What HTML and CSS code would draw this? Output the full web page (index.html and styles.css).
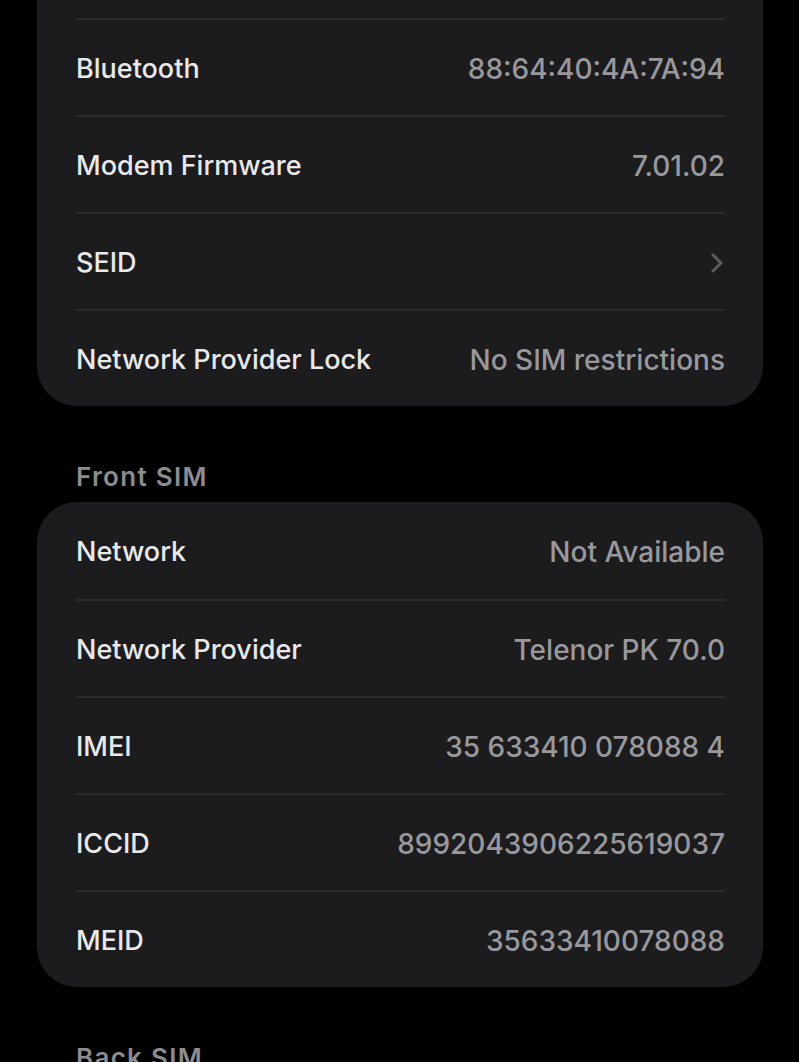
FILE: index.html
```html
<!DOCTYPE html>
<html lang="en">
  <head>
    <meta charset="UTF-8" />
    <meta name="viewport" content="width=device-width, initial-scale=1.0" />
    <title>About</title>
    <link rel="stylesheet" href="styles.css">
  </head>
  <body>
    <div class="page">
      <div class="card card-top">
        <div class="card-spacer"></div>
        <div class="row">
          <span class="label">Bluetooth</span>
          <span class="value">88:64:40:4A:7A:94</span>
        </div>
        <div class="row">
          <span class="label">Modem Firmware</span>
          <span class="value">7.01.02</span>
        </div>
        <div class="row">
          <span class="label">SEID</span>
          <svg class="chevron" width="12" height="20" viewBox="0 0 12 20">
            <path d="M2 2 L10 10 L2 18" fill="none" stroke="#5b5b60" stroke-width="3" stroke-linecap="round" stroke-linejoin="round" />
          </svg>
        </div>
        <div class="row">
          <span class="label">Network Provider Lock</span>
          <span class="value">No SIM restrictions</span>
        </div>
      </div>

      <h3 class="section-title">Front SIM</h3>
      <div class="card">
        <div class="row">
          <span class="label">Network</span>
          <span class="value">Not Available</span>
        </div>
        <div class="row">
          <span class="label">Network Provider</span>
          <span class="value">Telenor PK 70.0</span>
        </div>
        <div class="row">
          <span class="label">IMEI</span>
          <span class="value">35 633410 078088 4</span>
        </div>
        <div class="row">
          <span class="label">ICCID</span>
          <span class="value">8992043906225619037</span>
        </div>
        <div class="row">
          <span class="label">MEID</span>
          <span class="value">35633410078088</span>
        </div>
      </div>

      <h3 class="section-title">Back SIM</h3>
    </div>
  </body>
</html>
```

FILE: styles.css
```css
body {
  margin: 0;
  background-color: #000000;
  font-family: Inter, "Liberation Sans", sans-serif;
  overflow: hidden;
}

.page {
  padding: 0 36px 0 37px;
}

.card {
  background-color: #1c1c1e;
  border-radius: 40px;
  padding: 0 38px 0 39px;
}

.card-top {
  border-top-left-radius: 0;
  border-top-right-radius: 0;
}

.card-spacer {
  height: 18px;
}

.row {
  height: 97px;
  box-sizing: border-box;
  padding-top: 2px;
  display: flex;
  align-items: center;
  justify-content: space-between;
  border-top: 2px solid #2c2c2f;
}

.card > .row:first-child {
  border-top: none;
}

.label {
  color: #e9e9eb;
  font-size: 27px;
  font-weight: 500;
}

.value {
  color: #98989d;
  font-size: 28px;
  font-weight: 500;
}

.chevron {
  margin-right: 2px;
}

.section-title {
  margin: 0;
  padding: 55px 0 0 39px;
  height: 41px;
  color: #8c8c91;
  font-size: 26px;
  font-weight: 600;
  letter-spacing: 1.3px;
}
```
